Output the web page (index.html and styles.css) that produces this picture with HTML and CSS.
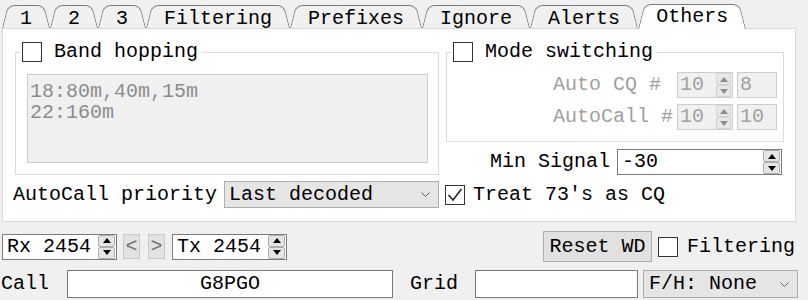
FILE: index.html
```html
<!DOCTYPE html>
<html>
<head>
<meta charset="utf-8">
<link rel="stylesheet" href="styles.css">
</head>
<body>
<div class="tabbar">
  <div class="tab">1</div>
  <div class="tab">2</div>
  <div class="tab">3</div>
  <div class="tab">Filtering</div>
  <div class="tab">Prefixes</div>
  <div class="tab">Ignore</div>
  <div class="tab">Alerts</div>
  <div class="tab tab-active">Others</div>
</div>
<div class="pane">
  <fieldset class="group">
    <legend class="group-title"><span class="check"></span><span>Band hopping</span></legend>
    <div class="memo">18:80m,40m,15m<br>22:160m</div>
  </fieldset>
  <div class="right-col">
    <fieldset class="group">
      <legend class="group-title"><span class="check"></span><span>Mode switching</span></legend>
      <div class="mode-grid">
        <span class="dim">Auto CQ #</span>
        <div class="spin spin-disabled"><span>10</span><span class="spin-btns"><span class="spin-btn spin-up"></span><span class="spin-btn spin-down"></span></span></div>
        <div class="field-disabled">8</div>
        <span class="dim">AutoCall #</span>
        <div class="spin spin-disabled"><span>10</span><span class="spin-btns"><span class="spin-btn spin-up"></span><span class="spin-btn spin-down"></span></span></div>
        <div class="field-disabled">10</div>
      </div>
    </fieldset>
    <div class="minsig">
      <span>Min Signal</span>
      <div class="spin spin-min"><span>-30</span><span class="spin-btns"><span class="spin-btn spin-up"></span><span class="spin-btn spin-down"></span></span></div>
    </div>
  </div>
  <div class="prio">
    <span>AutoCall priority</span>
    <div class="combo combo-prio"><span>Last decoded</span><svg class="chev" width="9" height="5" viewBox="0 0 9 5"><polyline points="0.5,0.5 4.5,4.5 8.5,0.5" fill="none" stroke="#606060" stroke-width="1"/></svg></div>
  </div>
  <div class="treat">
    <span class="check"><svg width="18" height="18" viewBox="0 0 18 18"><polyline points="2.5,9 7,14 15.5,3" fill="none" stroke="#222" stroke-width="1.5"/></svg></span>
    <span>Treat 73's as CQ</span>
  </div>
</div>
<div class="toolbar">
  <div class="spin spin-rx"><span>Rx 2454</span><span class="spin-btns"><span class="spin-btn spin-up"></span><span class="spin-btn spin-down"></span></span></div>
  <div class="nav-btn nav-prev">&lt;</div>
  <div class="nav-btn nav-next">&gt;</div>
  <div class="spin spin-tx"><span>Tx 2454</span><span class="spin-btns"><span class="spin-btn spin-up"></span><span class="spin-btn spin-down"></span></span></div>
  <div class="btn">Reset WD</div>
  <span class="check check-filter"></span>
  <span class="filter-label">Filtering</span>
</div>
<div class="callrow">
  <span>Call</span>
  <div class="input input-call">G8PGO</div>
  <span class="lbl-grid">Grid</span>
  <div class="input input-grid"></div>
  <div class="combo combo-fh"><span>F/H: None</span><svg class="chev" width="9" height="5" viewBox="0 0 9 5"><polyline points="0.5,0.5 4.5,4.5 8.5,0.5" fill="none" stroke="#606060" stroke-width="1"/></svg></div>
</div>
</body>
</html>
```

FILE: styles.css
```css
* { box-sizing: border-box; }
html, body { margin: 0; padding: 0; }
body {
  width: 808px;
  height: 300px;
  overflow: hidden;
  background: #f0f0f0;
  font-family: "Courier New", "Liberation Mono", monospace;
  font-size: 20px;
  line-height: 22px;
  color: #000;
  white-space: nowrap;
}

/* Tabs */
.tabbar {
  display: flex;
  align-items: flex-end;
  height: 28px;
  padding-left: 2px;
}
.tab {
  position: relative;
  z-index: 0;
  height: 23px;
  padding: 3px 18px 0;
}
.tab::before,
.tab::after {
  content: "";
  position: absolute;
  top: 0;
  bottom: 0;
  width: 56%;
  z-index: -1;
  background: #f0f0f0;
  border-top: 1px solid #7a7a7a;
}
.tab::before {
  left: 0;
  border-left: 1px solid #7a7a7a;
  border-top-left-radius: 7px;
  transform: skewX(-14deg);
  transform-origin: 0 100%;
}
.tab::after {
  right: 0;
  border-right: 1px solid #7a7a7a;
  border-top-right-radius: 7px;
  transform: skewX(14deg);
  transform-origin: 100% 100%;
}
.tab-active {
  z-index: 1;
  height: 25px;
  margin-bottom: -1px;
  padding-top: 2px;
}
.tab-active::before,
.tab-active::after { background: #fff; }

/* Pane */
.pane {
  display: grid;
  grid-template-columns: 424px 338px;
  column-gap: 7px;
  row-gap: 6px;
  margin: 0 12px 0 2px;
  padding: 12px 11px 13px 12px;
  background: #fff;
  border: 1px solid #d9d9d9;
}
.group {
  margin: 0;
  padding: 0;
  border: 1px solid #dcdcdc;
  min-width: 0;
}
.group-title {
  display: flex;
  align-items: center;
  gap: 12px;
  margin-left: 4px;
  padding: 0 3px 0 2px;
  line-height: 22px;
}
.check {
  display: inline-flex;
  align-items: center;
  justify-content: center;
  width: 20px;
  height: 20px;
  flex: none;
  border: 1px solid #333;
  background: #fff;
}
.memo {
  margin: 11px 10px 10px 11px;
  height: 89px;
  padding: 6px 2px;
  border: 1px solid #cccccc;
  background: #f0f0f0;
  color: #8c8c8c;
  line-height: 21px;
}
.right-col {
  display: flex;
  flex-direction: column;
}
.mode-grid {
  display: grid;
  grid-template-columns: 120px 56px 40px;
  grid-auto-rows: 26px;
  column-gap: 4px;
  row-gap: 6px;
  justify-content: end;
  align-items: center;
  margin: 9px 6px 11px 0;
}
.dim { color: #a0a0a0; overflow: visible; }

/* Spin boxes */
.spin {
  display: flex;
  align-items: center;
  height: 26px;
  border: 1px solid #7a7a7a;
  background: #fff;
  padding-left: 4px;
}
.spin-btns {
  display: flex;
  flex-direction: column;
  align-self: stretch;
  margin-left: auto;
  margin-right: 1px;
  width: 17px;
  flex: none;
}
.spin-btn {
  flex: 1;
  display: flex;
  align-items: center;
  justify-content: center;
  background: #e5e5e5;
  border: 1px solid #adadad;
  border-radius: 2px;
}
.spin-btn::after {
  content: "";
  border-left: 4px solid transparent;
  border-right: 4px solid transparent;
}
.spin-up::after { border-bottom: 5px solid #000; }
.spin-down::after { border-top: 5px solid #000; }

.spin-disabled {
  border-color: #cccccc;
  background: #f0f0f0;
  color: #a0a0a0;
  padding-left: 2px;
}
.spin-disabled .spin-btns { width: 15px; }
.spin-disabled .spin-btn {
  background: #e8e8e8;
  border-color: #d4d4d4;
}
.spin-disabled .spin-up::after { border-bottom-color: #8c8c8c; }
.spin-disabled .spin-down::after { border-top-color: #8c8c8c; }

.field-disabled {
  height: 26px;
  border: 1px solid #cccccc;
  background: #f0f0f0;
  color: #a0a0a0;
  padding: 1px 0 0 2px;
}

.minsig {
  display: flex;
  justify-content: flex-end;
  align-items: center;
  gap: 7px;
  margin: 7px 2px 0 0;
}
.spin-min { width: 165px; }

/* Combo */
.combo {
  display: flex;
  align-items: center;
  height: 27px;
  border: 1px solid #adadad;
  background: #e5e5e5;
  padding: 0 8px 0 4px;
}
.chev { margin-left: auto; flex: none; }
.prio {
  display: flex;
  align-items: center;
  margin-left: -2px;
}
.combo-prio { width: 215px; margin-left: auto; }
.treat {
  display: flex;
  align-items: center;
  gap: 8px;
  margin-left: -1px;
}

/* Toolbar */
.toolbar {
  display: flex;
  align-items: center;
  height: 31px;
  margin-top: 9px;
  padding: 0 13px 0 2px;
}
.spin-rx, .spin-tx { width: 115px; }
.spin-tx { margin-left: 7px; }
.nav-btn {
  width: 17px;
  height: 25px;
  display: flex;
  align-items: center;
  justify-content: center;
  background: #e3e3e3;
  border: 1px solid #c8c8c8;
  color: #707070;
}
.nav-prev { margin-left: 6px; }
.nav-next { margin-left: 8px; }
.btn {
  display: flex;
  align-items: center;
  justify-content: center;
  width: 109px;
  height: 31px;
  margin-left: auto;
  background: #e1e1e1;
  border: 1px solid #adadad;
}
.check-filter { margin-left: 6px; }
.filter-label { margin-left: 9px; }

/* Call row */
.callrow {
  display: flex;
  align-items: center;
  height: 28px;
  margin-top: 8px;
  padding-left: 1px;
}
.input {
  height: 28px;
  border: 1px solid #7a7a7a;
  background: #fff;
}
.input-call {
  width: 326px;
  margin-left: 18px;
  display: flex;
  align-items: center;
  justify-content: center;
}
.lbl-grid { margin-left: 17px; }
.input-grid { width: 163px; margin-left: 17px; }
.combo-fh { width: 155px; height: 28px; margin-left: 5px; padding-left: 5px; }
```
